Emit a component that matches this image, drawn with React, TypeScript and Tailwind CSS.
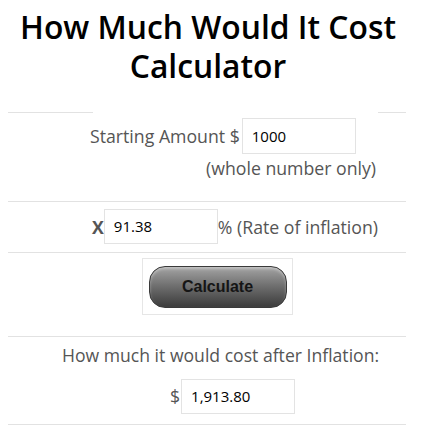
import React from "react";

const font = { fontFamily: '"Open Sans", "Noto Sans", sans-serif' };

function Box({ value, className }: { value: string; className: string }) {
  return (
    <div
      className={`flex items-center border border-[#e3e3e3] bg-white pl-[9px] text-[15px] text-black ${className}`}
    >
      {value}
    </div>
  );
}

export default function App() {
  return (
    <div className="h-[434px] w-[431px] overflow-hidden bg-white" style={font}>
      <h1 className="pt-[7px] pr-[15px] text-center text-[31.8px] font-semibold leading-[39px] text-black">
        How Much Would It Cost
        <br />
        Calculator
      </h1>

      <div className="mt-[27px] ml-[8px] w-[398px]">
        {/* top border, broken in the middle */}
        <div className="flex h-px">
          <div className="w-[85px] bg-[#e2e2e2]" />
          <div className="flex-1" />
          <div className="w-[28px] bg-[#e2e2e2]" />
        </div>

        <div className="h-[88px] pt-[5px] text-[17.7px] text-[#555]">
          <div className="flex items-center pl-[82px]">
            <span>Starting Amount $</span>
            <Box value="1000" className="ml-[2px] h-[36px] w-[114px]" />
          </div>
          <div className="mt-[2px] pl-[198px] leading-[24px]">(whole number only)</div>
        </div>

        <div className="flex h-[51px] items-start border-t border-[#e2e2e2] pt-[7px] pl-[84px] text-[17.7px] text-[#555]">
          <span className="mt-[5px] font-bold">X</span>
          <Box value="91.38" className="h-[35px] w-[114px]" />
          <span className="mt-[5px]">% (Rate of inflation)</span>
        </div>

        <div className="h-[84px] border-t border-[#e2e2e2] pt-[5px]">
          <div className="ml-[134px] flex h-[57px] w-[151px] items-center justify-center border border-[#e6e6e6] bg-white">
            <button
              className="mt-[1px] flex h-[42px] w-[138px] items-center justify-center rounded-[16px] border border-[#3a3a3a] bg-gradient-to-b from-[#a4a4a4] via-[#6c6c6c] to-[#3c3c3c] text-[16px] font-bold text-[#151515] shadow-[inset_0_2px_3px_rgba(255,255,255,0.35)]"
              style={{ fontFamily: '"Liberation Sans", Arial, sans-serif' }}
            >
              Calculate
            </button>
          </div>
        </div>

        <div className="h-[88px] border-t border-[#e2e2e2] text-[17.6px] text-[#555]">
          <div className="pt-[6px] pl-[54px] leading-[24px]">How much it would cost after Inflation:</div>
          <div className="mt-[12px] flex items-center pl-[162px]">
            <span>$</span>
            <Box value="1,913.80" className="ml-[1px] h-[35px] w-[114px]" />
          </div>
        </div>
        <div className="h-px bg-[#e2e2e2]" />
      </div>
    </div>
  );
}
